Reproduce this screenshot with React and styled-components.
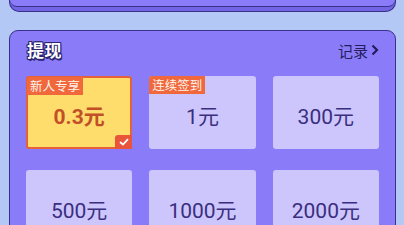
import React from 'react';
import styled, { createGlobalStyle } from 'styled-components';

const GlobalStyle = createGlobalStyle`
  html, body {
    margin: 0;
    padding: 0;
    background: #b4c8f5;
    font-family: "Noto Sans CJK SC", "Noto Sans", sans-serif;
  }
`;

const Page = styled.div`
  padding: 0 8px 0 9px;
  height: 225px;
  overflow: hidden;
`;

const TopCard = styled.div`
  height: 12px;
  box-sizing: border-box;
  background: #7165e2;
  border: 1px solid #3a2f8a;
  border-top: none;
  border-radius: 0 0 10px 10px;
`;

const TopFace = styled.div`
  height: 6px;
  background: #8a7cf8;
  border-bottom: 1px solid #3a2f8a;
  border-radius: 0 0 9px 9px;
`;

const Card = styled.div`
  margin-top: 18px;
  background: #8a7cf8;
  border: 1px solid #3a2f8a;
  border-radius: 9px;
  padding: 0 16px 40px 16px;
`;

const Header = styled.div`
  height: 36px;
  display: flex;
  align-items: center;
  justify-content: space-between;
  padding-left: 1px;
`;

const Title = styled.div`
  font-size: 17px;
  font-weight: 700;
  color: #fff;
  letter-spacing: 0.5px;
  text-shadow:
    1px 0 0 #2c2472, -1px 0 0 #2c2472, 0 1px 0 #2c2472, 0 -1px 0 #2c2472,
    1px 1px 0 #2c2472, -1px 1px 0 #2c2472, 1px -1px 0 #2c2472, -1px -1px 0 #2c2472,
    1px 2px 0 #2c2472;
`;

const Record = styled.div`
  display: flex;
  align-items: center;
  gap: 3px;
  font-size: 15px;
  color: #241c5c;
  margin-top: 2px;
`;

const Grid = styled.div`
  margin-top: 9px;
  display: grid;
  grid-template-columns: repeat(3, 1fr);
  column-gap: 17px;
  row-gap: 21px;
`;

const Tile = styled.div`
  position: relative;
  height: 73px;
  box-sizing: border-box;
  border-radius: 3px;
  display: flex;
  align-items: center;
  justify-content: center;
  padding-top: 4px;
  background: ${(p) => (p.$active ? '#fedd6d' : '#cdc6fd')};
  border: ${(p) => (p.$active ? '2px solid #e5613a' : 'none')};
`;

const Amount = styled.div`
  font-family: Roboto, "Noto Sans CJK SC", sans-serif;
  font-size: 21px;
  font-weight: ${(p) => (p.$active ? 700 : 400)};
  color: ${(p) => (p.$active ? '#c24f27' : '#3a2e7e')};
`;

const Badge = styled.div`
  position: absolute;
  top: ${(p) => (p.$inset ? '-1px' : '0')};
  left: ${(p) => (p.$inset ? '-1px' : '0')};
  height: 18px;
  line-height: 18px;
  padding: 0 3px;
  font-size: 12.5px;
  color: #fff5ee;
  background: #f0683b;
  border-radius: 3px 0 0 0;
`;

const Check = styled.div`
  position: absolute;
  right: -2px;
  bottom: -2px;
  width: 17px;
  height: 14px;
  background: #e8553a;
  border-radius: 3px 0 0 0;
  display: flex;
  align-items: center;
  justify-content: center;
`;

const tiles = [
  { amount: '0.3元', badge: '新人专享', active: true },
  { amount: '1元', badge: '连续签到' },
  { amount: '300元' },
  { amount: '500元' },
  { amount: '1000元' },
  { amount: '2000元' },
];

export default function App() {
  return (
    <>
      <GlobalStyle />
      <Page>
        <TopCard>
          <TopFace />
        </TopCard>
        <Card>
          <Header>
            <Title>提现</Title>
            <Record>
              记录
              <svg width="8" height="12" viewBox="0 0 8 12">
                <path d="M1.5 1.5 L6 6 L1.5 10.5" fill="none" stroke="#241c5c" strokeWidth="2.2" />
              </svg>
            </Record>
          </Header>
          <Grid>
            {tiles.map((t) => (
              <Tile key={t.amount} $active={t.active}>
                {t.badge && <Badge $inset={t.active}>{t.badge}</Badge>}
                <Amount $active={t.active}>{t.amount}</Amount>
                {t.active && (
                  <Check>
                    <svg width="10" height="8" viewBox="0 0 10 8">
                      <path d="M1 4 L4 6.5 L9 1.2" fill="none" stroke="#fff" strokeWidth="1.8" />
                    </svg>
                  </Check>
                )}
              </Tile>
            ))}
          </Grid>
        </Card>
      </Page>
    </>
  );
}
